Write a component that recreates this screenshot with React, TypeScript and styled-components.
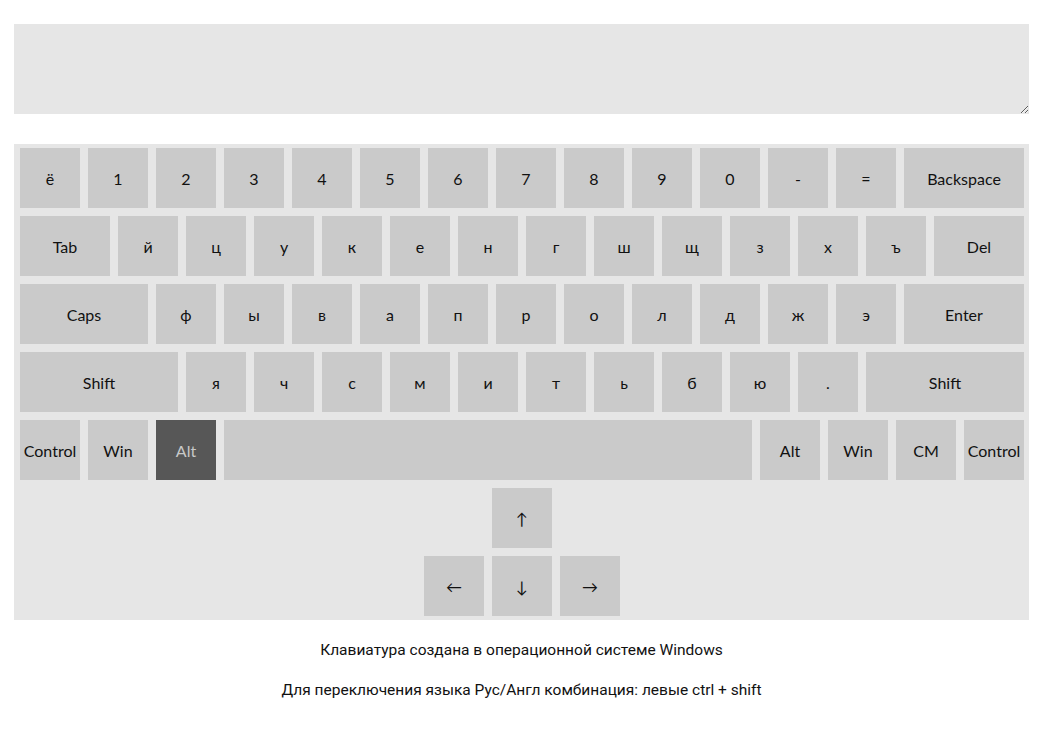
import React from "react";
import styled, { createGlobalStyle } from "styled-components";

const Global = createGlobalStyle`
  html, body { margin: 0; padding: 0; background: #fff; }
  body { font-family: Lato, "Open Sans", sans-serif; }
`;

const Page = styled.div`
  padding: 24px 15px 0 14px;
  display: flex;
  flex-direction: column;
`;

const Input = styled.textarea`
  box-sizing: border-box;
  display: block;
  width: 100%;
  height: 90px;
  margin: 0;
  border: none;
  outline: none;
  background: #e6e6e6;
  resize: vertical;
  padding: 4px;
  font-family: Lato, sans-serif;
  font-size: 16px;
`;

const Board = styled.div`
  margin-top: 30px;
  background: #e6e6e6;
  padding: 4px 5px 4px 6px;
  display: flex;
  flex-direction: column;
  gap: 8px;
`;

const Row = styled.div<{ $center?: boolean }>`
  display: flex;
  gap: 8px;
  justify-content: ${(p) => (p.$center ? "center" : "flex-start")};
`;

const Key = styled.div<{ $w?: number; $active?: boolean }>`
  box-sizing: border-box;
  width: ${(p) => p.$w ?? 60}px;
  height: 60px;
  flex: none;
  display: flex;
  align-items: center;
  justify-content: center;
  background: ${(p) => (p.$active ? "#575757" : "#cacaca")};
  color: ${(p) => (p.$active ? "#c8c8c8" : "#111")};
  font-family: Lato, "Open Sans", sans-serif;
  font-size: 16px;
  white-space: nowrap;
`;

const Notes = styled.div`
  margin-top: 21px;
  display: flex;
  flex-direction: column;
  align-items: center;
  gap: 21px;
  font-family: Roboto, sans-serif;
  font-size: 15.5px;
  color: #111;
  line-height: 19px;
`;

type K = [string, number?, boolean?];

const rows: K[][] = [
  [["ё"], ["1"], ["2"], ["3"], ["4"], ["5"], ["6"], ["7"], ["8"], ["9"], ["0"], ["-"], ["="], ["Backspace", 120]],
  [["Tab", 90], ["й"], ["ц"], ["у"], ["к"], ["е"], ["н"], ["г"], ["ш"], ["щ"], ["з"], ["х"], ["ъ"], ["Del", 90]],
  [["Caps", 128], ["ф"], ["ы"], ["в"], ["а"], ["п"], ["р"], ["о"], ["л"], ["д"], ["ж"], ["э"], ["Enter", 120]],
  [["Shift", 158], ["я"], ["ч"], ["с"], ["м"], ["и"], ["т"], ["ь"], ["б"], ["ю"], ["."], ["Shift", 158]],
  [["Control"], ["Win"], ["Alt", 60, true], ["", 528], ["Alt"], ["Win"], ["CM"], ["Control"]],
];

export default function App() {
  return (
    <>
      <Global />
      <Page>
        <Input />
        <Board>
          {rows.map((r, i) => (
            <Row key={i}>
              {r.map(([label, w, active], j) => (
                <Key key={j} $w={w} $active={active}>
                  {label}
                </Key>
              ))}
            </Row>
          ))}
          <Row $center>
            <Key>↑</Key>
          </Row>
          <Row $center>
            <Key>←</Key>
            <Key>↓</Key>
            <Key>→</Key>
          </Row>
        </Board>
        <Notes>
          <span>Клавиатура создана в операционной системе Windows</span>
          <span>Для переключения языка Рус/Англ комбинация: левые ctrl + shift</span>
        </Notes>
      </Page>
    </>
  );
}
